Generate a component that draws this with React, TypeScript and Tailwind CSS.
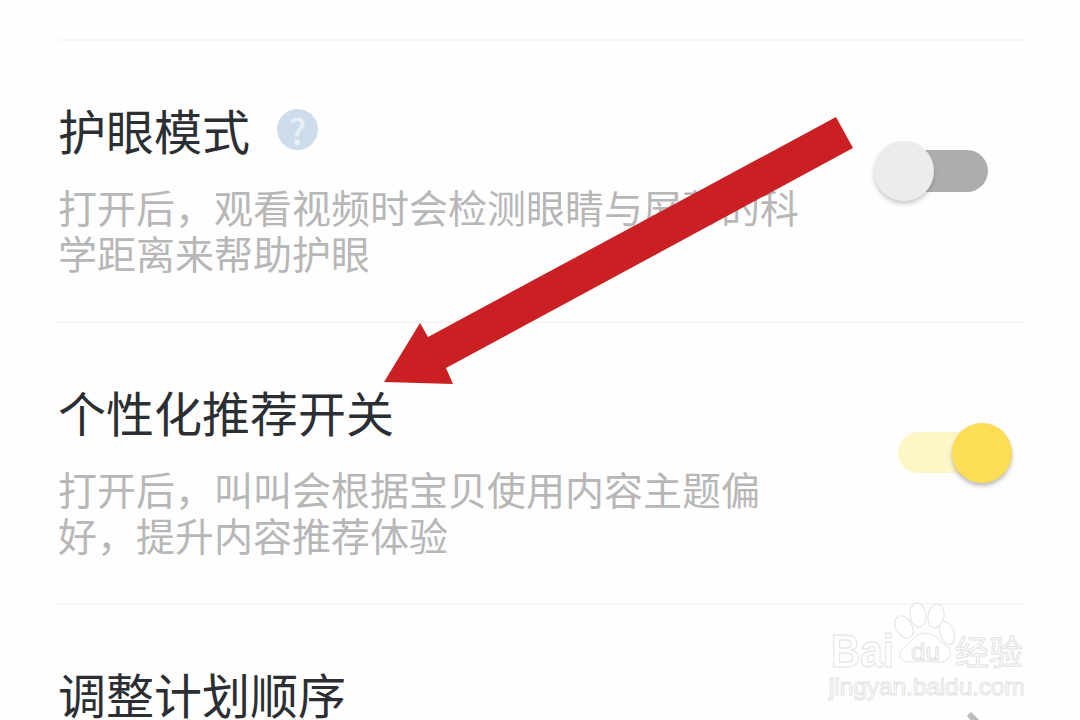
import React from 'react';

// ---- Settings rows ----

interface RowProps {
  title: string;
  desc: string;
  descWidth: string;
  help?: boolean;
  toggle?: 'on' | 'off';
}

function Toggle({ on }: { on: boolean }) {
  return (
    <div
      className={
        on
          ? 'relative mt-[109px] mr-[36px] h-[41px] w-[90px] shrink-0 rounded-full bg-[#fdf7c8]'
          : 'relative mt-[109px] mr-[36px] h-[42px] w-[90px] shrink-0 rounded-full bg-[#adadad]'
      }
    >
      <div
        className={
          on
            ? 'absolute right-[-24px] top-[-9px] h-[60px] w-[60px] rounded-full bg-[#fddc56] shadow-[0_3px_4px_rgba(90,90,90,0.4)]'
            : 'absolute left-[-24px] top-[-9px] h-[60px] w-[60px] rounded-full bg-[#ececec] shadow-[0_3px_4px_rgba(90,90,90,0.3)]'
        }
      />
    </div>
  );
}

function SettingRow({ title, desc, descWidth, help, toggle }: RowProps) {
  return (
    <div className="flex h-[282px] items-start justify-between border-t-2 border-[#f6f6f6]">
      <div className="pt-[64px]">
        <div className="flex h-[48px] items-center gap-[27px] text-[48px] leading-[48px] text-[#2b2f33]">
          <span>{title}</span>
          {help && (
            <span className="flex h-[41px] w-[41px] items-center justify-center rounded-full bg-[#cddcea] text-[35px] font-medium leading-none text-[#e9f0f6]">
              ?
            </span>
          )}
        </div>
        <p className={`mt-[31px] text-[39px] leading-[45.5px] text-[#b7b7b7] ${descWidth}`}>{desc}</p>
      </div>
      {toggle && <Toggle on={toggle === 'on'} />}
    </div>
  );
}

// ---- Overlays ----

function RedArrow() {
  return (
    <svg className="absolute left-0 top-0" width="1080" height="720" viewBox="0 0 1080 720">
      <polygon
        points="836,117 853,148 446,368 453,384 384,382 420,323 428,337"
        fill="#cb2023"
      />
    </svg>
  );
}

function Watermark() {
  const outline = { fill: '#ffffff', stroke: '#e2e2e2', strokeWidth: 1 };
  return (
    <svg className="absolute left-[820px] top-[600px]" width="220" height="110" viewBox="0 0 220 110">
      <text
        x="11"
        y="67"
        fontFamily="Liberation Sans, sans-serif"
        fontWeight="700"
        fontSize="46"
        textLength="63"
        lengthAdjust="spacingAndGlyphs"
        {...outline}
      >
        Bai
      </text>
      <ellipse cx="84" cy="27" rx="8" ry="12" transform="rotate(-30 84 27)" {...outline} />
      <ellipse cx="98" cy="15" rx="8" ry="12" transform="rotate(-8 98 15)" {...outline} />
      <ellipse cx="116" cy="16" rx="8" ry="12" transform="rotate(10 116 16)" {...outline} />
      <ellipse cx="127" cy="33" rx="7" ry="12" transform="rotate(-20 127 33)" {...outline} />
      <path
        d="M104 33 C94 34 92 42 85 47 C76 53 79 63 90 62 C98 62 106 60 114 62 C128 64 134 55 128 47 C120 42 116 33 104 33 Z"
        {...outline}
      />
      <text
        x="91"
        y="60"
        fontFamily="Liberation Sans, sans-serif"
        fontSize="24"
        textLength="29"
        lengthAdjust="spacingAndGlyphs"
        {...outline}
      >
        du
      </text>
      <text x="135" y="65" fontFamily="Noto Sans CJK SC, sans-serif" fontSize="34" {...outline}>
        经验
      </text>
      <text x="9" y="95" fontFamily="Liberation Sans, sans-serif" fontSize="24.5" textLength="196" {...outline}>
        jingyan.baidu.com
      </text>
    </svg>
  );
}

export default function App() {
  return (
    <div className="relative h-[720px] w-[1080px] overflow-hidden bg-[#fefefe] font-['Noto_Sans_CJK_SC',sans-serif]">
      <div className="px-[58px] pr-[56px] pt-[39px]">
        <SettingRow
          title="护眼模式"
          desc="打开后，观看视频时会检测眼睛与屏幕的科学距离来帮助护眼"
          descWidth="w-[742px]"
          help
          toggle="off"
        />
        <SettingRow
          title="个性化推荐开关"
          desc="打开后，叫叫会根据宝贝使用内容主题偏好，提升内容推荐体验"
          descWidth="w-[703px]"
          toggle="on"
        />
        <div className="relative border-t-2 border-[#f6f6f6] pt-[64px]">
          <div className="h-[48px] text-[48px] leading-[48px] text-[#2b2f33]">调整计划顺序</div>
          <svg className="absolute right-[29px] top-[105px]" width="30" height="50" viewBox="0 0 30 50">
            <path d="M4 4 L26 26 L4 48" fill="none" stroke="#bcbcbc" strokeWidth="6" />
          </svg>
        </div>
      </div>
      <Watermark />
      <RedArrow />
    </div>
  );
}
